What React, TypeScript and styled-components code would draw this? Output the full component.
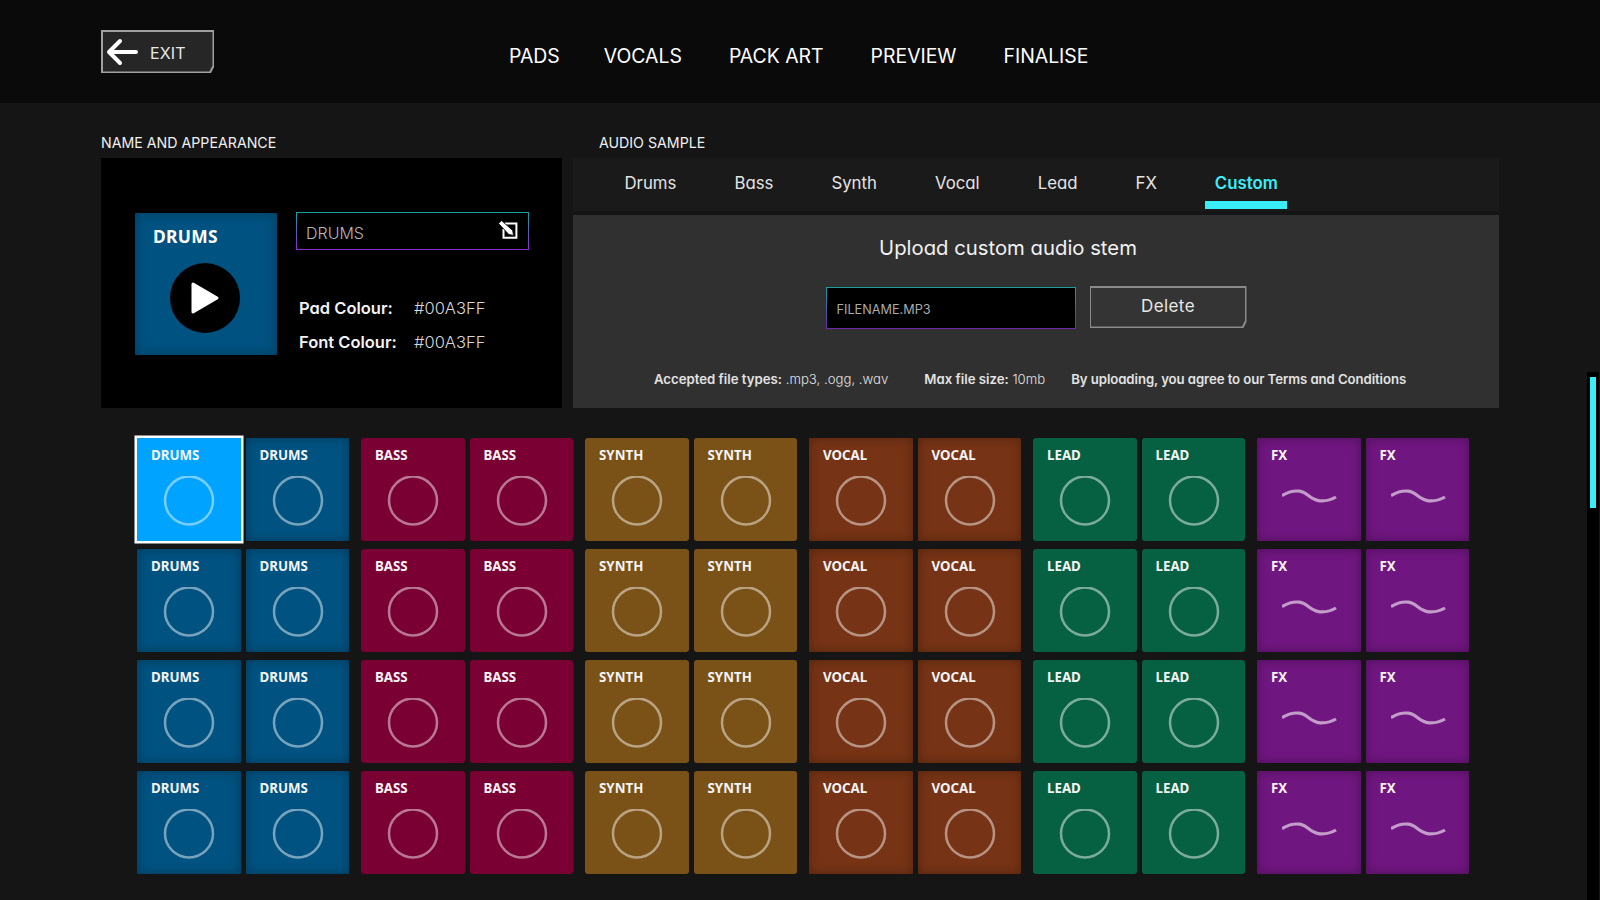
import React from "react";
import styled, { createGlobalStyle } from "styled-components";

const Global = createGlobalStyle`
  html, body { margin: 0; padding: 0; height: 100%; overflow: hidden; background: #151515; }
  body { font-family: Inter, "Liberation Sans", sans-serif; font-feature-settings: "cv11"; color: #fff; }
  * { box-sizing: border-box; }
`;

const Page = styled.div`width: 1600px; height: 900px; overflow: hidden; background: #151515;`;
const Header = styled.header`height: 103px; background: #0a0a0a; display: flex; padding: 30px 0 0 101px; align-items: flex-start;`;
const cut = "polygon(0 0, 100% 0, 100% calc(100% - 6px), calc(100% - 3px) 100%, 0 100%)";
const ExitOuter = styled.button`
  width: 113px; height: 43px; padding: 1.5px; border: 0; background: #a0a0a0; clip-path: ${cut}; color: #e8e8e8;
  font: inherit; display: block;
`;
const ExitInner = styled.span`
  height: 100%; display: flex; align-items: center; padding-left: 3px; gap: 12.5px; background: #262626; clip-path: ${cut};
  font-size: 16px; letter-spacing: 0.1px;
`;
const ExitText = styled.span`padding-top: 2px;`;
const Nav = styled.nav`display: flex; gap: 47px; margin-left: 295px; padding-top: 12px;`;
const NavItem = styled.a`font-size: 19.4px; line-height: 28px; color: #fff; white-space: nowrap; &:first-child { margin-right: -3px; }`;

const Main = styled.main`padding: 31px 0 0 101px;`;
const Columns = styled.div`display: grid; grid-template-columns: 461px 926px; column-gap: 11px;`;
const SectionTitle = styled.h2<{ $inset?: number }>`
  margin: 0 0 6px; padding-left: ${(p) => p.$inset ?? 0}px; font-size: 14.2px; line-height: 18px; font-weight: 400; color: #f0f0f0; white-space: nowrap;
`;
const AppearancePanel = styled.section`height: 250px; background: #000; display: flex; align-items: flex-start; padding: 54px 0 0 34px;`;
const PreviewPad = styled.div`
  width: 142px; height: 142px; margin-top: 1px; background: #005280; box-shadow: inset 0 0 12px rgba(0,0,0,.28); border-radius: 1px;
  padding: 11px 0 0 18px; display: flex; flex-direction: column;
`;
const PreviewLabel = styled.div`font-family: "Noto Sans", sans-serif; font-weight: 700; font-size: 17.4px; line-height: 24px; letter-spacing: .3px; font-feature-settings: normal;`;
const PlayCircle = styled.div`
  width: 70px; height: 70px; margin: 15px 0 0 17px; border-radius: 50%; background: #000; display: flex; align-items: center; justify-content: center;
`;
const AppearanceFields = styled.div`margin-left: 19px; width: 233px;`;
const gradientBorder = `border: 1.5px solid transparent; border-image: linear-gradient(#1b9fa0, #8a2bcb) 1;`;
const NameField = styled.div`
  ${gradientBorder} height: 38px; display: flex; align-items: center; justify-content: space-between; padding: 0 10px 0 9px; font-size: 16px; color: #b8b8b8; font-weight: 300;
`;
const NameText = styled.span`padding-top: 3px;`;
const EditIcon = styled.svg`display: block; margin-top: -3px;`;
const InfoGrid = styled.dl`margin: 41.5px 0 0 3px; display: grid; grid-template-columns: 115px auto; grid-auto-rows: 33.5px; align-items: center;`;
const InfoKey = styled.dt`font-size: 16.5px; font-weight: 600; color: #f2f2f2;`;
const InfoValue = styled.dd`margin: 0; font-size: 16.5px; font-weight: 300; color: #d8d8d8;`;

const AudioColumn = styled.div`display: flex; flex-direction: column;`;
const TabBar = styled.div`height: 53px; background: #1a1a1a; display: flex; gap: 39px; padding-left: 42px; align-items: flex-start;`;
const Tab = styled.div<{ $active?: boolean }>`
  height: 51px; padding: 7px 9.5px 0; display: flex; align-items: center; font-size: 16.8px; font-weight: ${(p) => (p.$active ? 600 : 400)};
  color: ${(p) => (p.$active ? "#3aeef8" : "#e4e4e4")}; border-bottom: 8px solid ${(p) => (p.$active ? "#3aeef8" : "transparent")};
`;
const UploadPanel = styled.section`
  margin-top: 4px; height: 193px; background: #303030; display: flex; flex-direction: column; align-items: center; padding-top: 18px;
`;
const UploadTitle = styled.h3`margin: 0; padding-right: 56px; font-size: 20.3px; line-height: 30px; font-weight: 400; color: #f2f2f2;`;
const UploadRow = styled.div`margin-top: 23px; height: 43px; display: flex; gap: 14px; align-items: flex-start;`;
const FileField = styled.div`
  ${gradientBorder} border-image: linear-gradient(#1b9fa0, #6f26ab) 1; margin-top: 1px; width: 250px; height: 42px; background: #000; display: flex; align-items: center; padding: 2px 10px 0; font-size: 12.7px; color: #aaa;
`;
const DeleteOuter = styled.button`
  width: 157px; height: 42px; padding: 1.5px; border: 0; background: #8a8a8a; clip-path: ${cut}; color: #e6e6e6; font: inherit; display: block;
`;
const DeleteInner = styled.span`
  height: 100%; display: flex; align-items: center; justify-content: center; padding-bottom: 3px; background: #343434; clip-path: ${cut}; font-size: 17px; letter-spacing: .4px;
`;
const UploadFooter = styled.div`margin-top: 40px; padding-right: 12px; display: flex; font-size: 13.2px; line-height: 20px; color: #e2e2e2; white-space: nowrap;`;
const FootItem = styled.span<{ $gap: number; $tight?: boolean }>`
  margin-left: ${(p) => p.$gap}px; font-weight: 300; letter-spacing: ${(p) => (p.$tight ? "-0.08px" : "0")};
  b { font-weight: 600; }
`;

const PadBoard = styled.div`display: flex; gap: 12px; margin: 30px 0 0 36px;`;
const PadGroup = styled.div`display: grid; grid-template-columns: repeat(2, 103.5px); grid-auto-rows: 103px; column-gap: 5px; row-gap: 8px;`;
const Pad = styled.div<{ $color: string; $selected?: boolean; $flat?: boolean }>`
  position: relative; background: ${(p) => p.$color}; border-radius: ${(p) => (p.$flat ? 3 : 1)}px; padding: 7px 0 0 14px; display: flex; flex-direction: column;
  box-shadow: ${(p) => (p.$selected ? "0 0 0 2.5px #fff" : p.$flat ? "none" : "inset 0 0 11px rgba(0,0,0,.3)")};
  ${(p) => (p.$selected ? "border-radius: 0;" : "")}
`;
const PadLabel = styled.div`font-family: "Noto Sans", sans-serif; font-feature-settings: normal; font-weight: 700; font-size: 13.3px; line-height: 20px; color: #f4f4f4;`;
const PadGlyph = styled.svg`display: block; margin: 11px 0 0 11px;`;

const ScrollTrack = styled.div`position: fixed; right: 1px; top: 372px; bottom: 0; width: 12px; background: #000; padding: 5px 3px 0;`;
const ScrollThumb = styled.div`height: 131px; background: #3aeef8;`;

const Ring = () => (
  <PadGlyph width="56" height="50" viewBox="0 0 56 50" fill="none">
    <circle cx="27" cy="24.5" r="24" stroke="#fff" strokeOpacity=".47" strokeWidth="2.5" />
  </PadGlyph>
);
const Wave = () => (
  <PadGlyph width="56" height="50" viewBox="0 0 56 50" fill="none">
    <path d="M0 19.5C6 16 12 14.4 17.5 15.2C26 16.4 28 24 38 24.8C44 25.2 49 24 54 21" stroke="#fff" strokeOpacity=".58" strokeWidth="3.2" />
  </PadGlyph>
);

const groups = [
  { label: "DRUMS", color: "#005280", flat: false },
  { label: "BASS", color: "#7a0033", flat: true },
  { label: "SYNTH", color: "#7a5116", flat: true },
  { label: "VOCAL", color: "#763315", flat: false },
  { label: "LEAD", color: "#066042", flat: true },
  { label: "FX", color: "#701680", flat: false },
];
const tabs = ["Drums", "Bass", "Synth", "Vocal", "Lead", "FX", "Custom"];
const navItems = ["PADS", "VOCALS", "PACK ART", "PREVIEW", "FINALISE"];

export default function App() {
  return (
    <Page>
      <Global />
      <Header>
        <ExitOuter>
          <ExitInner>
            <svg width="32" height="28" viewBox="0 0 32 28" fill="none" stroke="#fff" strokeWidth="4" strokeLinecap="round" strokeLinejoin="round">
              <path d="M30 14H4M14 3L3 14L14 25" />
            </svg>
            <ExitText>EXIT</ExitText>
          </ExitInner>
        </ExitOuter>
        <Nav>
          {navItems.map((n) => (
            <NavItem key={n}>{n}</NavItem>
          ))}
        </Nav>
      </Header>
      <Main>
        <Columns>
          <div>
            <SectionTitle>NAME AND APPEARANCE</SectionTitle>
            <AppearancePanel>
              <PreviewPad>
                <PreviewLabel>DRUMS</PreviewLabel>
                <PlayCircle>
                  <svg width="30" height="34" viewBox="0 0 30 34">
                    <path d="M3 3L27 17L3 31Z" fill="#fff" stroke="#fff" strokeWidth="3" strokeLinejoin="round" />
                  </svg>
                </PlayCircle>
              </PreviewPad>
              <AppearanceFields>
                <NameField>
                  <NameText>DRUMS</NameText>
                  <EditIcon width="20" height="19" viewBox="0 0 20 19" fill="none">
                    <path d="M7 3.5H18.4V17.8H5.5V9" stroke="#fff" strokeWidth="2" />
                    <path d="M.6 3.6L3.6.6L14.6 10.4L15.6 15.4L10.8 14.4Z" fill="#fff" stroke="#000" strokeWidth=".8" />
                  </EditIcon>
                </NameField>
                <InfoGrid>
                  <InfoKey>Pad Colour:</InfoKey>
                  <InfoValue>#00A3FF</InfoValue>
                  <InfoKey>Font Colour:</InfoKey>
                  <InfoValue>#00A3FF</InfoValue>
                </InfoGrid>
              </AppearanceFields>
            </AppearancePanel>
          </div>
          <AudioColumn>
            <SectionTitle $inset={26}>AUDIO SAMPLE</SectionTitle>
            <TabBar>
              {tabs.map((t) => (
                <Tab key={t} $active={t === "Custom"}>{t}</Tab>
              ))}
            </TabBar>
            <UploadPanel>
              <UploadTitle>Upload custom audio stem</UploadTitle>
              <UploadRow>
                <FileField>FILENAME.MP3</FileField>
                <DeleteOuter>
                  <DeleteInner>Delete</DeleteInner>
                </DeleteOuter>
              </UploadRow>
              <UploadFooter>
                <FootItem $gap={0}><b>Accepted file types:</b> .mp3, .ogg, .wav</FootItem>
                <FootItem $gap={36}><b>Max file size:</b> 10mb</FootItem>
                <FootItem $gap={26} $tight><b>By uploading, you agree to our Terms and Conditions</b></FootItem>
              </UploadFooter>
            </UploadPanel>
          </AudioColumn>
        </Columns>
        <PadBoard>
          {groups.map((g, gi) => (
            <PadGroup key={g.label}>
              {Array.from({ length: 8 }).map((_, i) => (
                <Pad key={i} $flat={g.flat} $color={gi === 0 && i === 0 ? "#00a3ff" : g.color} $selected={gi === 0 && i === 0}>
                  <PadLabel>{g.label}</PadLabel>
                  {g.label === "FX" ? <Wave /> : <Ring />}
                </Pad>
              ))}
            </PadGroup>
          ))}
        </PadBoard>
      </Main>
      <ScrollTrack>
        <ScrollThumb />
      </ScrollTrack>
    </Page>
  );
}
